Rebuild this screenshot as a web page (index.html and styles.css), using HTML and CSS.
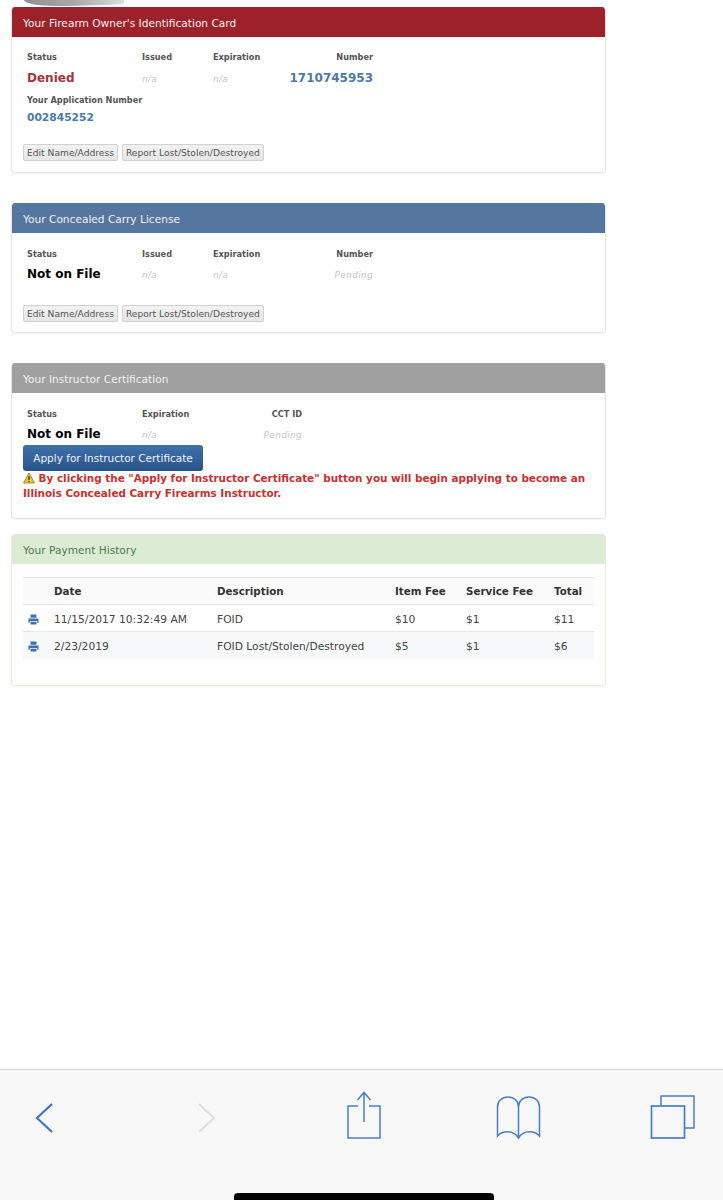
FILE: index.html
```html
<!DOCTYPE html>
<html lang="en">
<head>
  <meta charset="UTF-8">
  <meta name="viewport" content="width=device-width, initial-scale=1.0">
  <title>Your Cards</title>
  <link rel="stylesheet" href="styles.css">
</head>
<body>
  <main class="page">
    <div class="swoosh"></div>

    <section class="panel panel-foid">
      <h2 class="panel-title panel-red">Your Firearm Owner's Identification Card</h2>
      <div class="panel-body">
        <div class="stats">
          <span class="label">Status</span>
          <span class="label">Issued</span>
          <span class="label">Expiration</span>
          <span class="label right">Number</span>
          <span class="value denied">Denied</span>
          <span class="muted">n/a</span>
          <span class="muted">n/a</span>
          <span class="value blue right">1710745953</span>
        </div>
        <div class="application">
          <span class="label">Your Application Number</span>
          <span class="app-number">002845252</span>
        </div>
        <div class="actions actions-foid">
          <button class="btn">Edit Name/Address</button>
          <button class="btn">Report Lost/Stolen/Destroyed</button>
        </div>
      </div>
    </section>

    <section class="panel panel-ccl">
      <h2 class="panel-title panel-blue">Your Concealed Carry License</h2>
      <div class="panel-body">
        <div class="stats">
          <span class="label">Status</span>
          <span class="label">Issued</span>
          <span class="label">Expiration</span>
          <span class="label right">Number</span>
          <span class="value black">Not on File</span>
          <span class="muted">n/a</span>
          <span class="muted">n/a</span>
          <span class="muted right">Pending</span>
        </div>
        <div class="actions actions-ccl">
          <button class="btn">Edit Name/Address</button>
          <button class="btn">Report Lost/Stolen/Destroyed</button>
        </div>
      </div>
    </section>

    <section class="panel panel-instructor">
      <h2 class="panel-title panel-gray">Your Instructor Certification</h2>
      <div class="panel-body">
        <div class="stats stats-short">
          <span class="label">Status</span>
          <span class="label">Expiration</span>
          <span class="label right">CCT ID</span>
          <span class="value black">Not on File</span>
          <span class="muted">n/a</span>
          <span class="muted right">Pending</span>
        </div>
        <button class="btn-primary">Apply for Instructor Certificate</button>
        <p class="warning">
          <svg class="warn-icon" viewBox="0 0 12 12" width="12" height="12" aria-hidden="true">
            <path d="M6 1 L11.5 11 H0.5 Z" fill="#f2c832" stroke="#8a7420" stroke-width="0.8" stroke-linejoin="round"/>
            <path d="M6 4.2 V7.8" stroke="#222" stroke-width="1.3"/>
            <circle cx="6" cy="9.4" r="0.7" fill="#222"/>
          </svg>
          By clicking the "Apply for Instructor Certificate" button you will begin applying to become an Illinois Concealed Carry Firearms Instructor.
        </p>
      </div>
    </section>

    <section class="panel panel-payments">
      <h2 class="panel-title panel-green">Your Payment History</h2>
      <div class="panel-body">
        <table class="history">
          <thead>
            <tr>
              <th class="col-icon"></th>
              <th class="col-date">Date</th>
              <th class="col-desc">Description</th>
              <th class="col-fee">Item Fee</th>
              <th class="col-service">Service Fee</th>
              <th>Total</th>
            </tr>
          </thead>
          <tbody>
            <tr>
              <td>
                <svg class="printer" viewBox="0 0 12 12" width="11" height="11" aria-hidden="true">
                  <path d="M2.8 0.5 H9.2 V4 H2.8 Z M0.5 4.8 H11.5 V9.6 H10 V7.6 H2 V9.6 H0.5 Z M2.8 8.4 H9.2 V11.5 H2.8 Z" fill="#3f72ad"/>
                </svg>
              </td>
              <td>11/15/2017 10:32:49 AM</td>
              <td>FOID</td>
              <td>$10</td>
              <td>$1</td>
              <td>$11</td>
            </tr>
            <tr class="alt">
              <td>
                <svg class="printer" viewBox="0 0 12 12" width="11" height="11" aria-hidden="true">
                  <path d="M2.8 0.5 H9.2 V4 H2.8 Z M0.5 4.8 H11.5 V9.6 H10 V7.6 H2 V9.6 H0.5 Z M2.8 8.4 H9.2 V11.5 H2.8 Z" fill="#3f72ad"/>
                </svg>
              </td>
              <td>2/23/2019</td>
              <td>FOID Lost/Stolen/Destroyed</td>
              <td>$5</td>
              <td>$1</td>
              <td>$6</td>
            </tr>
          </tbody>
        </table>
      </div>
    </section>
  </main>

  <footer class="toolbar">
    <div class="toolbar-icons">
      <svg viewBox="0 0 20 48" width="20" height="48" aria-hidden="true">
        <path d="M17 13 L2 27 L17 41" fill="none" stroke="#3f73cf" stroke-width="2.2"/>
      </svg>
      <svg viewBox="0 0 20 48" width="20" height="48" aria-hidden="true">
        <path d="M1 13 L16 27 L1 41" fill="none" stroke="#e0e0e0" stroke-width="2.2"/>
      </svg>
      <svg viewBox="0 0 36 48" width="36" height="48" aria-hidden="true">
        <path d="M12 15 H2 V47 H34 V15 H23 M18 31 V1.5 M11.5 9 L18 1.5 L24.5 9" fill="none" stroke="#4a7dc9" stroke-width="1.5"/>
      </svg>
      <svg viewBox="0 0 46 48" width="46" height="48" aria-hidden="true">
        <path d="M22.5 47 V16 C22.5 10 18 6 12 6 C6 6 1.5 10 1.5 16 V45 C6 40 17 38 22.5 47 C28 38 39 40 43.5 45 V16 C43.5 10 39 6 33 6 C27 6 22.5 10 22.5 16" fill="none" stroke="#4a7dc9" stroke-width="1.5"/>
      </svg>
      <svg viewBox="0 0 46 48" width="46" height="48" aria-hidden="true">
        <path d="M11 15 V5 H44 V37 H34.5" fill="none" stroke="#4a7dc9" stroke-width="1.5"/>
        <rect x="1.5" y="15" width="33" height="32" fill="none" stroke="#4a7dc9" stroke-width="1.7"/>
      </svg>
    </div>
    <div class="home-bar"></div>
  </footer>
</body>
</html>
```

FILE: styles.css
```css
* {
  margin: 0;
  padding: 0;
  box-sizing: border-box;
}

body {
  width: 723px;
  height: 1200px;
  display: flex;
  flex-direction: column;
  background-color: white;
  font-family: 'DejaVu Sans', Verdana, sans-serif;
  font-size: 11px;
  color: #333;
  overflow: hidden;
}

.page {
  flex: 1;
  padding-left: 11px;
  position: relative;
}

.swoosh {
  position: absolute;
  top: 0;
  left: 24px;
  width: 100px;
  height: 6px;
  background: linear-gradient(to right, #8f8f8f, #a8a8a8 50%, #dcdcdc);
  border-bottom-left-radius: 30px 6px;
  border-bottom-right-radius: 70px 3px;
}

.panel {
  width: 595px;
  border: 1px solid #e3e3e3;
  border-top: none;
  border-radius: 4px;
  box-shadow: 0 1px 1px rgba(0, 0, 0, 0.04);
  overflow: hidden;
}

.panel-foid {
  margin-top: 7px;
  height: 166px;
}

.panel-ccl {
  margin-top: 30px;
  height: 130px;
}

.panel-instructor {
  margin-top: 30px;
  height: 156px;
}

.panel-payments {
  margin-top: 15px;
  height: 152px;
  border-color: #e6eeda;
}

.panel-title {
  height: 30px;
  margin: 0 -1px;
  padding-left: 12px;
  font-size: 10.6px;
  font-weight: normal;
  line-height: 32px;
  color: #f1f1f1;
}

.panel-red {
  background-color: #9d2129;
}

.panel-blue {
  background-color: #55769f;
}

.panel-gray {
  background-color: #a0a0a0;
}

.panel-green {
  background-color: #dcebd3;
  color: #4d7a53;
}

.panel-body {
  padding: 15px 11px 0;
}

.panel-foid .panel-body {
  padding-top: 14px;
}

.panel-foid .stats {
  row-gap: 5px;
}

.panel-payments .panel-body {
  padding-top: 13px;
}

.stats {
  display: grid;
  grid-template-columns: 115px 71px 76px 84px;
  padding-left: 4px;
  row-gap: 4px;
  align-items: baseline;
}

.stats-short {
  grid-template-columns: 115px 76px 84px;
}

.label {
  font-size: 8.2px;
  font-weight: bold;
  line-height: 12px;
  color: #555;
}

.right {
  text-align: right;
}

.value {
  font-size: 12px;
  font-weight: bold;
  line-height: 20px;
}

.denied {
  color: #a5343a;
}

.blue {
  color: #4c7aa8;
}

.black {
  color: #000;
}

.muted {
  font-size: 9px;
  font-style: italic;
  letter-spacing: 0.3px;
  color: #c4c4c4;
}

.application {
  display: flex;
  flex-direction: column;
  gap: 4px;
  margin-top: 6px;
  padding-left: 4px;
}

.app-number {
  font-size: 10.7px;
  font-weight: bold;
  line-height: 16px;
  color: #4c7aa8;
}

.actions {
  display: flex;
  gap: 4px;
}

.actions-foid {
  margin-top: 18px;
}

.actions-ccl {
  margin-top: 21px;
}

.btn {
  height: 17px;
  padding: 0 3px;
  border: 1px solid #d0d0d0;
  border-radius: 2px;
  background: linear-gradient(to bottom, #f2f2f2, #e6e6e6);
  font-family: inherit;
  font-size: 9.15px;
  color: #555;
}

.btn-primary {
  display: block;
  width: 180px;
  height: 26px;
  margin-top: 1px;
  border: none;
  border-radius: 3px;
  background: linear-gradient(to bottom, #3f71ab, #2a5388);
  font-family: inherit;
  font-size: 10.5px;
  color: #eef2f7;
}

.warning {
  font-size: 10.4px;
  font-weight: bold;
  line-height: 14.5px;
  color: #c9302c;
}

.warn-icon {
  vertical-align: -2px;
}

.history {
  width: 571px;
  border-collapse: collapse;
  font-size: 10.7px;
  text-align: left;
}

.history th {
  height: 27px;
  border-top: 1px solid #e6e6e6;
  border-bottom: 1px solid #e6e6e6;
  background-color: #fafafa;
  font-size: 10.3px;
  font-weight: bold;
  color: #333;
}

.history td {
  height: 27px;
  padding-top: 2px;
  color: #444;
}

.history .alt td {
  background-color: #f7f8fa;
  border-top: 1px solid #e8e8e8;
}

.col-icon {
  width: 31px;
}

.col-date {
  width: 163px;
}

.col-desc {
  width: 178px;
}

.col-fee {
  width: 71px;
}

.col-service {
  width: 88px;
}

.printer {
  display: block;
  margin-left: 5px;
}

.toolbar {
  height: 131px;
  background-color: #f8f8f8;
  border-top: 1px solid #d2d2d2;
  display: flex;
  flex-direction: column;
}

.toolbar-icons {
  display: grid;
  grid-template-columns: 163px 148px 150px 154px auto;
  padding: 21px 0 0 35px;
}

.home-bar {
  width: 260px;
  height: 7px;
  margin: auto 0 0 234px;
  background-color: #000;
  border-radius: 4px 4px 0 0;
}
```
